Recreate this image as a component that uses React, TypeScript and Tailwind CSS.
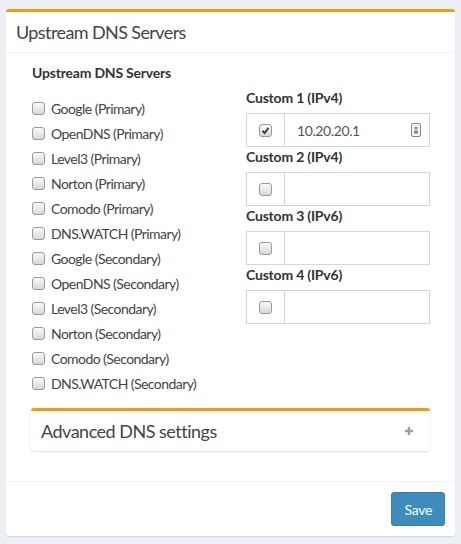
import React from "react";

const servers = [
  "Google (Primary)",
  "OpenDNS (Primary)",
  "Level3 (Primary)",
  "Norton (Primary)",
  "Comodo (Primary)",
  "DNS.WATCH (Primary)",
  "Google (Secondary)",
  "OpenDNS (Secondary)",
  "Level3 (Secondary)",
  "Norton (Secondary)",
  "Comodo (Secondary)",
  "DNS.WATCH (Secondary)",
];

const customs = [
  { label: "Custom 1 (IPv4)", value: "10.20.20.1", checked: true },
  { label: "Custom 2 (IPv4)", value: "", checked: false },
  { label: "Custom 3 (IPv6)", value: "", checked: false },
  { label: "Custom 4 (IPv6)", value: "", checked: false },
];

// fake native checkbox, grey rounded square
const Box = ({ checked }: { checked?: boolean }) => (
  <span className="flex items-center justify-center w-[13px] h-[13px] rounded-[3px] border border-[#9a9a9a] bg-gradient-to-b from-[#fafafa] to-[#d8d8d8] shrink-0">
    {checked && (
      <svg width="9" height="9" viewBox="0 0 9 9">
        <path d="M1.5 4.8 L3.6 7 L7.6 1.8" fill="none" stroke="#333" strokeWidth="1.8" />
      </svg>
    )}
  </span>
);

export default function App() {
  return (
    <div className="min-h-[544px] bg-[#ecf0f5] pt-[9px] px-[6px] font-['Lato',sans-serif] text-[14px] text-[#333]">
      <div className="bg-white border-t-[3px] border-[#f39c12] rounded-[3px] shadow-[0_1px_1px_rgba(0,0,0,0.1)]">
        {/* header */}
        <div className="px-[10px] py-[10px] border-b border-[#f4f4f4]">
          <h3 className="text-[18px] leading-[20px] text-[#444] tracking-[-0.6px]">Upstream DNS Servers</h3>
        </div>

        {/* body */}
        <div className="pt-[10px] pl-[25px] pr-[25px]">
          <div className="font-bold leading-[20px] pl-[1px] tracking-[-0.2px]">Upstream DNS Servers</div>
          <div className="flex mt-[5px]">
            <div className="w-[215px] pt-[8px] pl-[1px]">
              {servers.map((s) => (
                <div key={s} className="flex items-center h-[25px] gap-[6px]">
                  <Box />
                  <span className="text-[#444] tracking-[-0.55px]">{s}</span>
                </div>
              ))}
            </div>
            <div className="flex-1">
              {customs.map((c) => (
                <div key={c.label}>
                  <div className="font-bold leading-[20px] mb-[5px] tracking-[-0.2px]">{c.label}</div>
                  <div className="flex h-[34px] border border-[#d2d6de]">
                    <div className="w-[38px] flex items-center justify-center border-r border-[#d2d6de]">
                      <Box checked={c.checked} />
                    </div>
                    <div className="flex-1 flex items-center justify-between pl-[12px] pr-[8px] text-[#555] tracking-[-0.4px]">
                      <span>{c.value}</span>
                      {c.value && (
                        <svg width="10" height="14" viewBox="0 0 10 14">
                          <rect x="0.5" y="0.5" width="9" height="13" rx="1.5" fill="#f4f4f4" stroke="#888" />
                          <circle cx="5" cy="5" r="1.6" fill="#888" />
                          <rect x="3" y="7.5" width="4" height="3" fill="#888" />
                        </svg>
                      )}
                    </div>
                  </div>
                </div>
              ))}
            </div>
          </div>

          {/* advanced box */}
          <div className="mt-[12px] mb-[30px] bg-white border-t-[3px] border-[#f39c12] rounded-[3px] shadow-[0_1px_2px_rgba(0,0,0,0.12)] flex items-center justify-between px-[10px] py-[10px]">
            <span className="text-[18px] leading-[20px] text-[#444] tracking-[-0.5px]">Advanced DNS settings</span>
            <svg width="10" height="10" viewBox="0 0 10 10" className="mr-[6px]">
              <path d="M5 1 V9 M1 5 H9" stroke="#97a0b3" strokeWidth="2.4" />
            </svg>
          </div>
        </div>

        {/* footer */}
        <div className="border-t border-[#f4f4f4] p-[10px] flex justify-end">
          <button className="h-[34px] px-[12px] bg-[#3c8dbc] border border-[#367fa9] rounded-[3px] text-white tracking-[-0.3px]">
            Save
          </button>
        </div>
      </div>
    </div>
  );
}
